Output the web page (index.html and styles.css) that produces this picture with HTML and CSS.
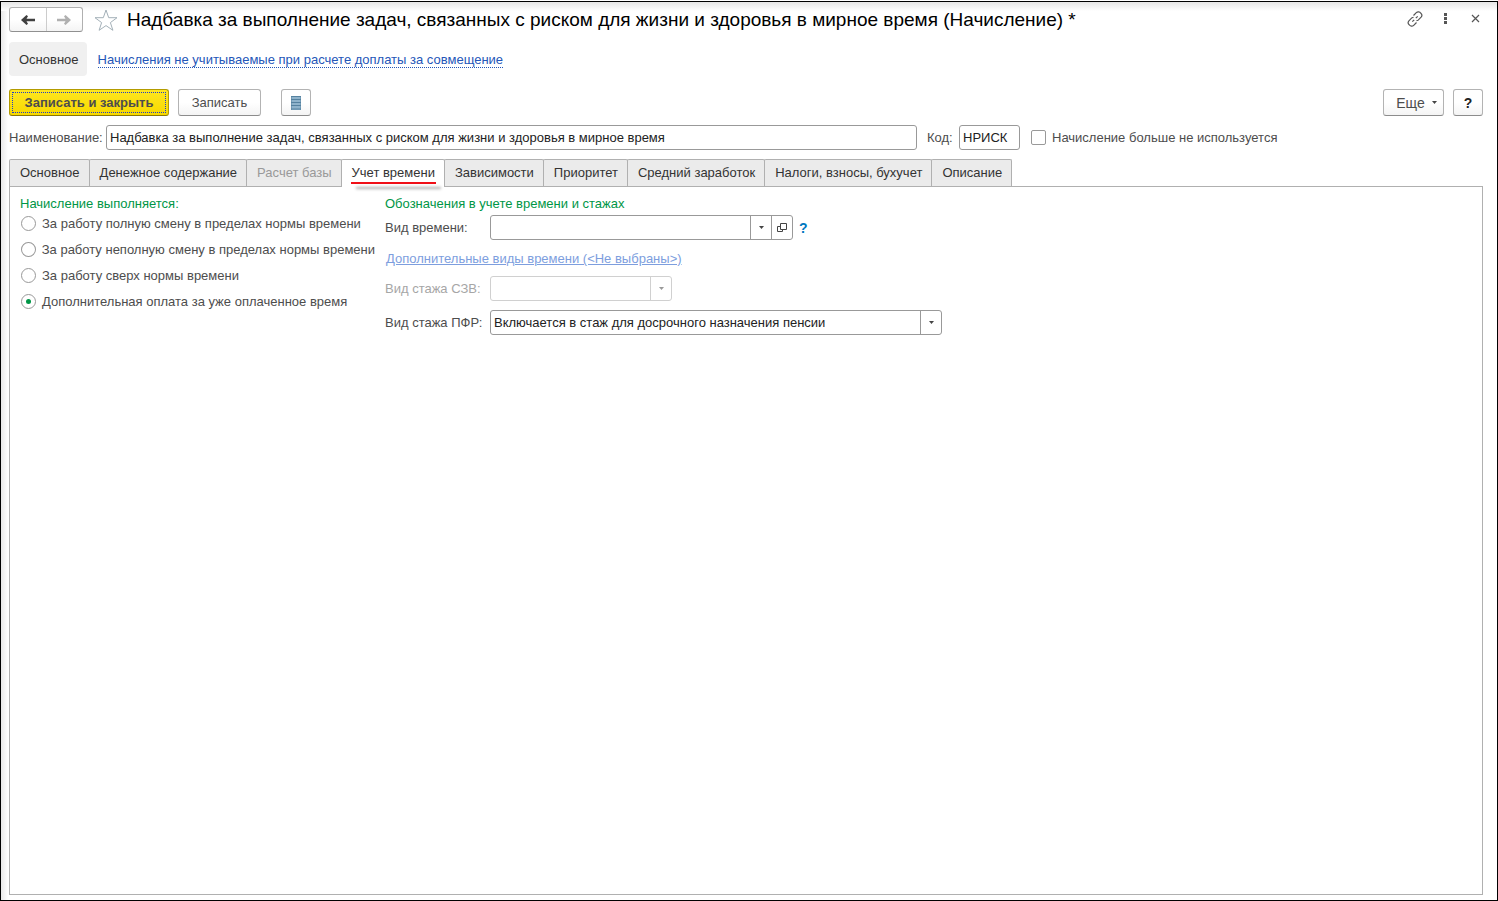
FILE: index.html
```html
<!DOCTYPE html>
<html lang="ru">
<head>
<meta charset="utf-8">
<title>Надбавка за выполнение задач (Начисление)</title>
<link rel="stylesheet" href="styles.css">
</head>
<body>
<main class="window">
  <header class="titlebar">
    <div class="history">
      <button class="history-btn" type="button" aria-label="Назад"><svg width="14" height="10" viewBox="0 0 14 10"><path d="M0 5 5.500 0 7 1.300 5.500 3.800H14v2.400H5.500L7 8.700 5.500 10z" fill="#404040"/></svg></button>
      <button class="history-btn" type="button" aria-label="Вперед"><svg width="14" height="10" viewBox="0 0 14 10"><path d="M14 5 8.500 0 7 1.300 8.500 3.800H0v2.400h8.500L7 8.700 8.500 10z" fill="#b0b0b0"/></svg></button>
    </div>
    <button class="icon-btn star" type="button" aria-label="В избранное"><svg width="24" height="22" viewBox="0 0 24 22"><path d="M12 1l2.700 7.700H23l-6.600 4.900 2.500 7.700L12 16.600l-6.900 4.700 2.500-7.700L1 8.700h8.300z" fill="#fff" stroke="#a3b0b8" stroke-width="1"/></svg></button>
    <h1 class="title">Надбавка за выполнение задач, связанных с риском для жизни и здоровья в мирное время (Начисление) *</h1>
    <div class="window-tools">
      <button class="icon-btn" type="button" aria-label="Получить ссылку"><svg width="16" height="16" viewBox="0 0 16 16" fill="none" stroke="#555" stroke-width="1.200"><path d="M6.500 4.500 9.300 1.700a2.900 2.900 0 0 1 4.500.5 2.900 2.900 0 0 1 .3 4L11 9.300 9.500 9.600M9.500 11.500 6.700 14.300a2.900 2.900 0 0 1-4.500-.5 2.900 2.900 0 0 1-.3-4L5 6.700l1.500-.3M5.300 10.700l1.900-1.900M8.800 7.200l1.900-1.900"/></svg></button>
      <button class="icon-btn" type="button" aria-label="Меню"><svg width="16" height="16" viewBox="0 0 16 16" fill="#555"><path d="M7 2h3v3H7zM7 6h3v3H7zM7 10h3v3H7z"/></svg></button>
      <button class="icon-btn" type="button" aria-label="Закрыть"><svg width="16" height="16" viewBox="0 0 16 16" fill="none" stroke="#555" stroke-width="1.200"><path d="M5 4l7 7m0-7l-7 7"/></svg></button>
    </div>
  </header>

  <nav class="sections">
    <a class="section-current" href="#main">Основное</a>
    <a class="section-link" href="#list">Начисления не учитываемые при расчете доплаты за совмещение</a>
  </nav>

  <div class="commands">
    <button class="btn btn-primary" type="button">Записать и закрыть</button>
    <button class="btn btn-save" type="button">Записать</button>
    <button class="btn btn-square btn-list" type="button" aria-label="Список"><svg width="10" height="14" viewBox="0 0 10 14"><path d="M0 0h10v14H0z" fill="#8fb3cb"/><path d="M0 .5h10M0 3.500h10M0 6.500h10M0 9.500h10M0 13h10" stroke="#5682a0"/><path d="M0 0v14M10 0v14" stroke="#5682a0"/></svg></button>
    <button class="btn btn-more" type="button">Еще <svg width="5" height="3" viewBox="0 0 5 3"><path d="M0 0h5L2.500 3z" fill="#444"/></svg></button>
    <button class="btn btn-square btn-help" type="button" aria-label="Справка">?</button>
  </div>

  <div class="fields">
    <label class="name-label" for="name">Наименование:</label>
    <input class="text name" id="name" type="text" value="Надбавка за выполнение задач, связанных с риском для жизни и здоровья в мирное время">
    <label class="code-label" for="code">Код:</label>
    <input class="text code" id="code" type="text" value="НРИСК">
    <label class="check"><input type="checkbox">Начисление больше не используется</label>
  </div>

  <div class="tabs" role="tablist">
    <button class="tab" type="button" role="tab">Основное</button>
    <button class="tab" type="button" role="tab">Денежное содержание</button>
    <button class="tab" type="button" role="tab" disabled>Расчет базы</button>
    <button class="tab tab-active" type="button" role="tab" aria-selected="true"><span class="marked">Учет времени</span></button>
    <button class="tab" type="button" role="tab">Зависимости</button>
    <button class="tab" type="button" role="tab">Приоритет</button>
    <button class="tab" type="button" role="tab">Средний заработок</button>
    <button class="tab" type="button" role="tab">Налоги, взносы, бухучет</button>
    <button class="tab" type="button" role="tab">Описание</button>
  </div>

  <section class="panel" role="tabpanel">
    <fieldset class="group modes">
      <legend>Начисление выполняется:</legend>
      <label class="radio"><input type="radio" name="mode">За работу полную смену в пределах нормы времени</label>
      <label class="radio"><input type="radio" name="mode">За работу неполную смену в пределах нормы времени</label>
      <label class="radio"><input type="radio" name="mode">За работу сверх нормы времени</label>
      <label class="radio"><input type="radio" name="mode" checked>Дополнительная оплата за уже оплаченное время</label>
    </fieldset>
    <fieldset class="group marks">
      <legend>Обозначения в учете времени и стажах</legend>
      <div class="row">
        <label for="kind">Вид времени:</label>
        <div class="combo combo-kind">
          <div class="choice"><select id="kind"><option></option></select><span class="arrow"><svg width="5" height="3" viewBox="0 0 5 3"><path d="M0 0h5L2.500 3z" fill="#444"/></svg></span></div>
          <button class="open" type="button" aria-label="Открыть"><svg width="10" height="10" viewBox="0 0 10 10" fill="none" stroke="#444"><path d="M3.500.5h6v6h-6zM3.500 3.500h-3v5h5v-2"/></svg></button>
        </div>
        <button class="hint" type="button" aria-label="Подсказка">?</button>
      </div>
      <a class="extra" href="#extra">Дополнительные виды времени (&lt;Не выбраны&gt;)</a>
      <div class="row row-disabled">
        <label for="szv">Вид стажа СЗВ:</label>
        <div class="combo combo-szv">
          <div class="choice"><select id="szv" disabled><option></option></select><span class="arrow"><svg width="5" height="3" viewBox="0 0 5 3"><path d="M0 0h5L2.500 3z" fill="#999"/></svg></span></div>
        </div>
      </div>
      <div class="row">
        <label for="pfr">Вид стажа ПФР:</label>
        <div class="combo combo-pfr">
          <div class="choice"><select id="pfr"><option>Включается в стаж для досрочного назначения пенсии</option></select><span class="arrow"><svg width="5" height="3" viewBox="0 0 5 3"><path d="M0 0h5L2.500 3z" fill="#444"/></svg></span></div>
        </div>
      </div>
    </fieldset>
  </section>
</main>
</body>
</html>
```
FILE: styles.css
```css
* { box-sizing: border-box; }
body {
  margin: 0;
  padding-top: 1px;
  font: 13px/16px "Liberation Sans", Arial, sans-serif;
  color: #4d4d4d;
  background: #fff;
}
button, input, select { font: inherit; color: inherit; }
button { padding: 0; }
svg { display: block; flex: none; }

.window {
  display: flex;
  flex-direction: column;
  min-height: calc(100vh - 1px);
  padding: 5px 14px 5px 8px;
  border: 1px solid #000;
  background:
    linear-gradient(to bottom, #e6e6e6, #fff) no-repeat 0 0 / 100% 9px,
    linear-gradient(to right, #e9e9e9, #fff 7px);
}

.titlebar { display: flex; align-items: center; height: 25px; }
.history {
  display: flex;
  width: 74px;
  height: 25px;
  border: 1px solid #b0b0b0;
  border-bottom-color: #909090;
  border-radius: 3px;
  background: linear-gradient(#fff 50%, #f4f4f4);
}
.history-btn {
  display: flex;
  flex: 1;
  align-items: center;
  justify-content: center;
  border: 0;
  background: none;
}
.history-btn + .history-btn { border-left: 1px solid #ccc; }
.icon-btn { border: 0; background: none; }
.star { margin: 0 9px 0 11px; }
.title {
  flex: 1;
  margin: 0;
  font-size: 19px;
  line-height: 24px;
  font-weight: 400;
  color: #000;
  white-space: nowrap;
}
.window-tools { display: flex; gap: 14px; padding-bottom: 2px; }

.sections { display: flex; align-items: center; gap: 11px; margin-top: 10px; }
.section-current {
  padding: 10px 8px 8px 10px;
  border-radius: 4px;
  background: #f0f0f0;
  color: #333;
  text-decoration: none;
}
.section-link { margin-top: 2px; color: #2456b8; line-height: 14px; text-decoration: none; border-bottom: 1px dotted #2456b8; }

.commands { display: flex; align-items: center; margin-top: 13px; }
.btn {
  display: flex;
  align-items: center;
  justify-content: center;
  height: 27px;
  border: 1px solid #b3b3b3;
  border-bottom-color: #8c8c8c;
  border-radius: 3px;
  background: linear-gradient(#fff 50%, #f4f4f4);
}
.btn-primary {
  width: 160px;
  border-color: #b39b00;
  border-bottom-color: #8c7800;
  background: linear-gradient(#ffe71f, #f7d800);
  font-weight: 700;
  outline: 1px dotted #1f3fc8;
  outline-offset: -4px;
}
.btn-save { width: 83px; margin-left: 9px; }
.btn-square { width: 30px; }
.btn-list { margin-left: 20px; }
.btn-more { width: 61px; gap: 7px; margin-left: auto; padding-left: 6px; font-size: 14px; }
.btn-help { margin-left: 9px; font-size: 14px; font-weight: 700; color: #222; }

.fields { display: flex; align-items: center; margin-top: 9px; white-space: nowrap; }
.text {
  height: 25px;
  padding: 0 3px;
  border: 1px solid #999;
  border-radius: 3px;
  background: #fff;
  color: #222;
}
.name-label { width: 97px; }
.name { flex: 0 1 811px; min-width: 0; }
.code-label { width: 32px; margin-left: 10px; }
.code { width: 61px; }
.check { display: flex; align-items: center; gap: 6px; margin-left: 11px; }
.check input {
  appearance: none;
  width: 15px;
  height: 15px;
  margin: 0;
  border: 1px solid #999;
  border-radius: 2px;
  background: #fff;
}

.tabs { display: flex; margin-top: 9px; }
.tab {
  height: 27px;
  padding: 0 9px 0 10px;
  border: 1px solid #b0b0b0;
  border-bottom: 0;
  border-radius: 2px 2px 0 0;
  background: #ebebeb;
  color: #333;
  white-space: nowrap;
}
.tab + .tab { margin-left: -1px; }
.tab:disabled { color: #999; }
.tab-active { position: relative; height: 28px; margin-bottom: -1px; padding-bottom: 2px; background: #fff; }
.marked { position: relative; }
.marked::after {
  content: "";
  position: absolute;
  left: -1px;
  right: -1px;
  bottom: -4px;
  height: 2px;
  background: #f01018;
  box-shadow: 5px 5px 3px #aaa;
}

.panel {
  display: flex;
  flex: 1;
  align-items: flex-start;
  gap: 10px;
  padding: 9px 10px;
  border: 1px solid #b0b0b0;
  background: #fff;
}
.group { margin: 0; padding: 0; border: 0; min-width: 0; }
legend { padding: 0; color: #009646; }
.modes { width: 355px; white-space: nowrap; }
.radio { display: flex; align-items: center; gap: 6px; height: 26px; }
.modes legend { margin-bottom: -1px; }
.radio input {
  appearance: none;
  display: grid;
  place-items: center;
  width: 15px;
  height: 15px;
  margin: 0 0 1px 1px;
  border: 1px solid #999;
  border-radius: 50%;
  background: #fff;
}
.radio input:checked::before {
  content: "";
  width: 5px;
  height: 5px;
  border-radius: 50%;
  background: #009646;
}

.marks legend { margin-bottom: 3px; }
.row { display: flex; align-items: center; }
.row label { width: 105px; white-space: nowrap; }
.combo {
  display: flex;
  height: 25px;
  border: 1px solid #999;
  border-radius: 3px;
  background: #fff;
  overflow: hidden;
}
.combo-kind { width: 303px; }
.combo-szv { width: 182px; }
.combo-pfr { width: 452px; }
.choice { position: relative; display: flex; flex: 1; }
.choice select {
  appearance: none;
  flex: 1;
  min-width: 0;
  padding: 0 24px 0 3px;
  border: 0;
  background: none;
  color: #222;
}
.arrow {
  position: absolute;
  top: 0;
  right: 0;
  bottom: 0;
  display: flex;
  align-items: center;
  justify-content: center;
  width: 21px;
  border-left: 1px solid #999;
  pointer-events: none;
}
.open {
  display: flex;
  align-items: center;
  justify-content: center;
  width: 21px;
  border: 0;
  border-left: 1px solid #999;
  background: none;
}
.hint { margin-left: 6px; border: 0; background: none; color: #0078c0; font-size: 14px; font-weight: 700; }
.extra { display: block; width: max-content; margin: 11px 0 9px 1px; color: #7d9ede; }
.row-disabled { margin-bottom: 9px; color: #a6a6a6; }
.row-disabled .combo, .row-disabled .arrow { border-color: #d0d0d0; }
```
